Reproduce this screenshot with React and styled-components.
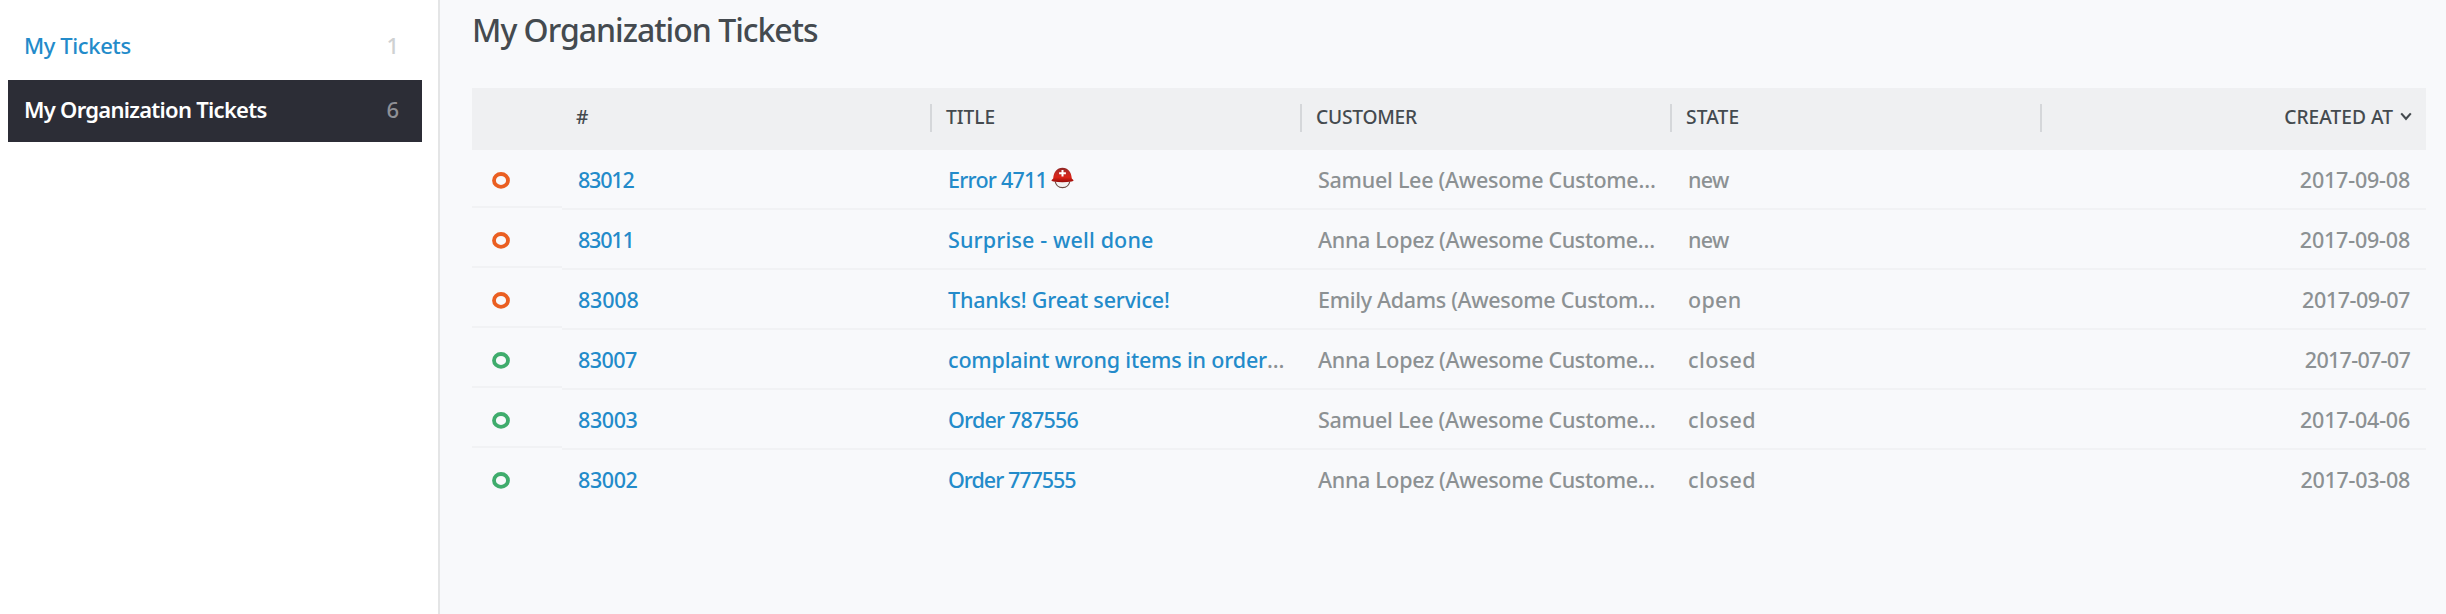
import React from 'react';
import styled, { createGlobalStyle } from 'styled-components';

const GlobalStyle = createGlobalStyle`
  * { box-sizing: border-box; }
  body {
    margin: 0;
    background: #f8f9fb;
    color: #444a4f;
    font-family: "Noto Sans", "Open Sans", sans-serif;
    font-weight: 500;
  }
`;

const Page = styled.div`
  display: flex;
  height: 614px;
  overflow: hidden;
`;

const Sidebar = styled.nav`
  display: flex;
  flex-direction: column;
  gap: 2px;
  width: 440px;
  flex: none;
  padding: 16px 16px 0 8px;
  background: #fff;
  border-right: 2px solid #e4e5e6;
`;

const NavItem = styled.a`
  display: flex;
  align-items: center;
  justify-content: space-between;
  height: 62px;
  padding: 0 23px 5px 16px;
  font-size: 22px;
  font-weight: ${(p) => (p.$active ? 600 : 500)};
  letter-spacing: ${(p) => p.$tracking}px;
  color: ${(p) => (p.$active ? '#fff' : '#238bca')};
  background: ${(p) => (p.$active ? '#2c2d36' : 'transparent')};
`;

const Count = styled.span`
  font-weight: 500;
  letter-spacing: 0;
  color: ${(p) => (p.$active ? '#8f9096' : '#cfd1d2')};
`;

const Main = styled.main`
  flex: 1;
  padding: 0 20px 0 32px;
`;

const Heading = styled.h1`
  margin: 0;
  height: 88px;
  padding-top: 8px;
  font-size: 32px;
  line-height: 44px;
  font-weight: 500;
  letter-spacing: -1px;
  color: #444a4f;
`;

const gridColumns = '90px 370px 370px 370px 370px 1fr';

const HeaderRow = styled.div`
  display: grid;
  grid-template-columns: ${gridColumns};
  height: 62px;
  padding: 16px 0 18px;
  background: #eff0f2;
`;

const HeaderCell = styled.div`
  display: flex;
  align-items: center;
  justify-content: ${(p) => (p.$end ? 'flex-end' : 'flex-start')};
  gap: 7px;
  padding: 0 14px 3px 14px;
  border-right: ${(p) => (p.$divided ? '2px solid #d5d7da' : 'none')};
  font-size: 19.2px;
  letter-spacing: ${(p) => p.$tracking || 0}px;
  line-height: 25px;
`;

const Row = styled.div`
  display: grid;
  grid-template-columns: ${gridColumns};
  height: 60px;
  font-size: 21.5px;

  & > * { border-bottom: 2px solid #f1f2f4; }
  &:last-child > * { border-bottom-color: transparent; }
`;

const StateCell = styled.div`
  display: flex;
  align-items: center;
  height: 58px;
  padding: 4px 0 0 20px;
`;

const Cell = styled.div`
  display: flex;
  align-items: center;
  justify-content: ${(p) => (p.$end ? 'flex-end' : 'flex-start')};
  padding: 1px 16px 0 16px;
  white-space: nowrap;
  color: #8c9193;
  letter-spacing: ${(p) => p.$tracking || 0}px;
`;

const Link = styled.a`
  color: #238bca;
`;

const HelmetIcon = styled.svg`
  margin: -3px 0 0 4px;
`;

function Ring({ color }) {
  return (
    <svg width="18" height="17" viewBox="0 0 18 17">
      <ellipse cx="9" cy="8.4" rx="7" ry="6.4" fill="none" stroke={color} strokeWidth="3.8" />
    </svg>
  );
}

function Helmet() {
  return (
    <HelmetIcon width="23" height="22" viewBox="0 0 23 22">
      <defs>
        <linearGradient id="shell" x1="0" y1="0" x2="0" y2="1">
          <stop offset="0" stopColor="#8d2523" />
          <stop offset="0.3" stopColor="#bb2a25" />
          <stop offset="0.65" stopColor="#dc2418" />
          <stop offset="1" stopColor="#960d0a" />
        </linearGradient>
      </defs>
      <path d="M4.2 14.5C5 18.6 8 20.6 11.5 20.6S18 18.6 18.8 14.5" fill="#f4f2f1" stroke="#6d4a42" strokeWidth="1.2" />
      <path d="M2.2 11.5C2.6 5 6 .8 11.5 .8S20.4 5 20.8 11.5L22.6 13.2Q22.6 14.2 20.6 14.4Q11.5 16 2.4 14.4Q.4 14.2 .4 13.2Z" fill="url(#shell)" />
      <path d="M11.5 3V9.4M8.1 6.2H14.9" stroke="#fff" strokeWidth="2" />
    </HelmetIcon>
  );
}

const samuel = { text: 'Samuel Lee (Awesome Custome…', tracking: -0.26 };
const anna = { text: 'Anna Lopez (Awesome Custome…', tracking: -0.34 };
const emily = { text: 'Emily Adams (Awesome Custom…', tracking: -0.32 };
const stateTracking = { new: -0.7, open: 0.3, closed: 0.4 };
const orange = '#ea5f22';
const green = '#3fac6c';

const tickets = [
  { id: ['83012', -1.2], title: ['Error 4711', -0.76], helmet: true, customer: samuel, state: 'new', date: ['2017-09-08', -0.2], color: orange },
  { id: ['83011', -1.2], title: ['Surprise - well done', 0.14], customer: anna, state: 'new', date: ['2017-09-08', -0.2], color: orange },
  { id: ['83008', -0.2], title: ['Thanks! Great service!', -0.19], customer: emily, state: 'open', date: ['2017-09-07', -0.42], color: orange },
  { id: ['83007', -0.55], title: ['complaint wrong items in order', -0.18], clipped: true, customer: anna, state: 'closed', date: ['2017-07-07', -0.7], color: green },
  { id: ['83003', -0.4], title: ['Order 787556', -0.81], customer: samuel, state: 'closed', date: ['2017-04-06', -0.22], color: green },
  { id: ['83002', -0.4], title: ['Order 777555', -1.0], customer: anna, state: 'closed', date: ['2017-03-08', -0.26], color: green },
];

export default function App() {
  return (
    <Page>
      <GlobalStyle />
      <Sidebar>
        <NavItem $tracking={-0.4}>
          My Tickets<Count>1</Count>
        </NavItem>
        <NavItem $active $tracking={-0.72}>
          My Organization Tickets<Count $active>6</Count>
        </NavItem>
      </Sidebar>
      <Main>
        <Heading>My Organization Tickets</Heading>
        <HeaderRow>
          <HeaderCell />
          <HeaderCell $divided>#</HeaderCell>
          <HeaderCell $divided>TITLE</HeaderCell>
          <HeaderCell $divided $tracking={-0.23}>CUSTOMER</HeaderCell>
          <HeaderCell $divided $tracking={0.13}>STATE</HeaderCell>
          <HeaderCell $end>
            CREATED AT
            <svg width="12" height="9" viewBox="0 0 12 9">
              <path d="M1.2 1.4L6 6.8L10.8 1.4" fill="none" stroke="#444a4f" strokeWidth="2.1" />
            </svg>
          </HeaderCell>
        </HeaderRow>
        <div>
          {tickets.map((t) => (
            <Row key={t.id[0]}>
              <StateCell><Ring color={t.color} /></StateCell>
              <Cell $tracking={t.id[1]}><Link>{t.id[0]}</Link></Cell>
              <Cell $tracking={t.title[1]}>
                <Link>{t.title[0]}</Link>
                {t.helmet && <Helmet />}
                {t.clipped && <span>…</span>}
              </Cell>
              <Cell $tracking={t.customer.tracking}>{t.customer.text}</Cell>
              <Cell $tracking={stateTracking[t.state]}>{t.state}</Cell>
              <Cell $end $tracking={t.date[1]}>{t.date[0]}</Cell>
            </Row>
          ))}
        </div>
      </Main>
    </Page>
  );
}
